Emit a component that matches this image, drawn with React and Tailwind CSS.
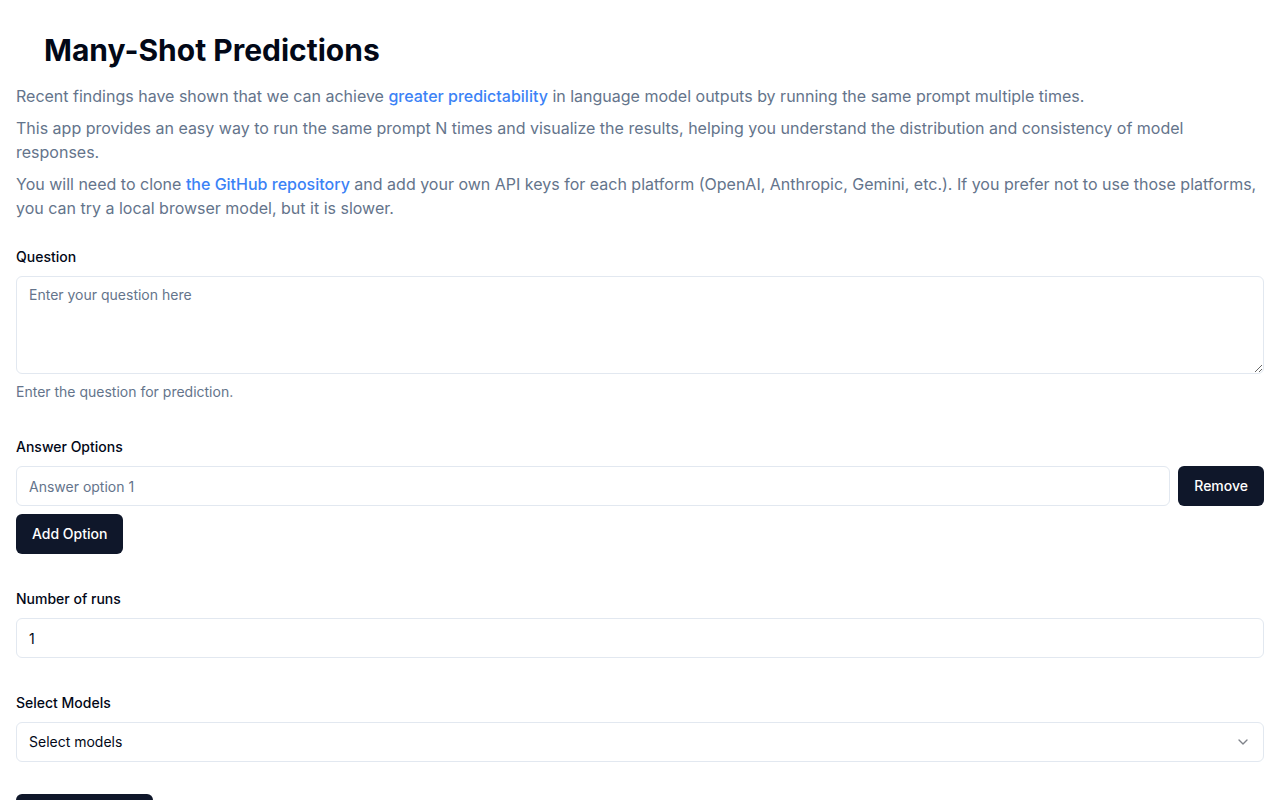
import React, { useState } from "react";
import { ChevronDown } from "lucide-react";

export default function App() {
  const [question, setQuestion] = useState("");
  const [options, setOptions] = useState([""]);
  const [runs, setRuns] = useState("1");

  const updateOption = (i, value) => {
    const next = [...options];
    next[i] = value;
    setOptions(next);
  };

  return (
    <div
      className="min-h-screen bg-white px-4 pt-8 pb-10 text-[#020817]"
      style={{ fontFamily: "Inter, 'Noto Sans', sans-serif" }}
    >
      <h1 className="pl-7 text-3xl font-bold leading-9">Many-Shot Predictions</h1>

      <div className="mt-4 space-y-2 text-base leading-6 text-[#64748b]">
        <p>
          Recent findings have shown that we can achieve{" "}
          <a href="#" className="font-medium text-[#3b82f6]">greater predictability</a> in language
          model outputs by running the same prompt multiple times.
        </p>
        <p>
          This app provides an easy way to run the same prompt N times and visualize the results,
          helping you understand the distribution and consistency of model responses.
        </p>
        <p>
          You will need to clone{" "}
          <a href="#" className="font-medium text-[#3b82f6]">the GitHub repository</a> and add your
          own API keys for each platform (OpenAI, Anthropic, Gemini, etc.). If you prefer not to use
          those platforms, you can try a local browser model, but it is slower.
        </p>
      </div>

      <form onSubmit={(e) => e.preventDefault()}>
        <label className="mt-[30px] block text-sm font-medium leading-none">Question</label>
        <textarea
          value={question}
          onChange={(e) => setQuestion(e.target.value)}
          placeholder="Enter your question here"
          className="mt-3 block h-[98px] w-full rounded-md border border-[#e2e8f0] px-3 py-2 text-sm leading-5 outline-none placeholder:text-[#64748b]"
        />
        <p className="mt-2 text-sm leading-5 text-[#64748b]">Enter the question for prediction.</p>

        <label className="mt-[38px] block text-sm font-medium leading-none">Answer Options</label>
        {options.map((opt, i) => (
          <div key={i} className="mt-3 flex gap-2">
            <input
              value={opt}
              onChange={(e) => updateOption(i, e.target.value)}
              placeholder={`Answer option ${i + 1}`}
              className="h-10 flex-1 rounded-md border border-[#e2e8f0] px-3 text-sm outline-none placeholder:text-[#64748b]"
            />
            <button
              type="button"
              onClick={() => setOptions(options.filter((_, j) => j !== i))}
              className="h-10 rounded-md bg-[#0f172a] px-4 text-sm font-medium text-white"
            >
              Remove
            </button>
          </div>
        ))}
        <button
          type="button"
          onClick={() => setOptions([...options, ""])}
          className="mt-2 h-10 rounded-md bg-[#0f172a] px-4 text-sm font-medium text-white"
        >
          Add Option
        </button>

        <label className="mt-[38px] block text-sm font-medium leading-none">Number of runs</label>
        <input
          type="number"
          value={runs}
          onChange={(e) => setRuns(e.target.value)}
          className="mt-3 block h-10 w-full rounded-md border border-[#e2e8f0] px-3 text-sm outline-none [appearance:textfield] [&::-webkit-inner-spin-button]:appearance-none"
        />

        <label className="mt-[38px] block text-sm font-medium leading-none">Select Models</label>
        <button
          type="button"
          className="mt-3 flex h-10 w-full items-center justify-between rounded-md border border-[#e2e8f0] px-3 text-sm"
        >
          <span>Select models</span>
          <ChevronDown className="h-4 w-4 opacity-50" />
        </button>

        <button type="submit" className="mt-8 h-10 rounded-md bg-[#0f172a] px-4 text-sm font-medium text-white">
          Run Predictions
        </button>
      </form>
    </div>
  );
}
